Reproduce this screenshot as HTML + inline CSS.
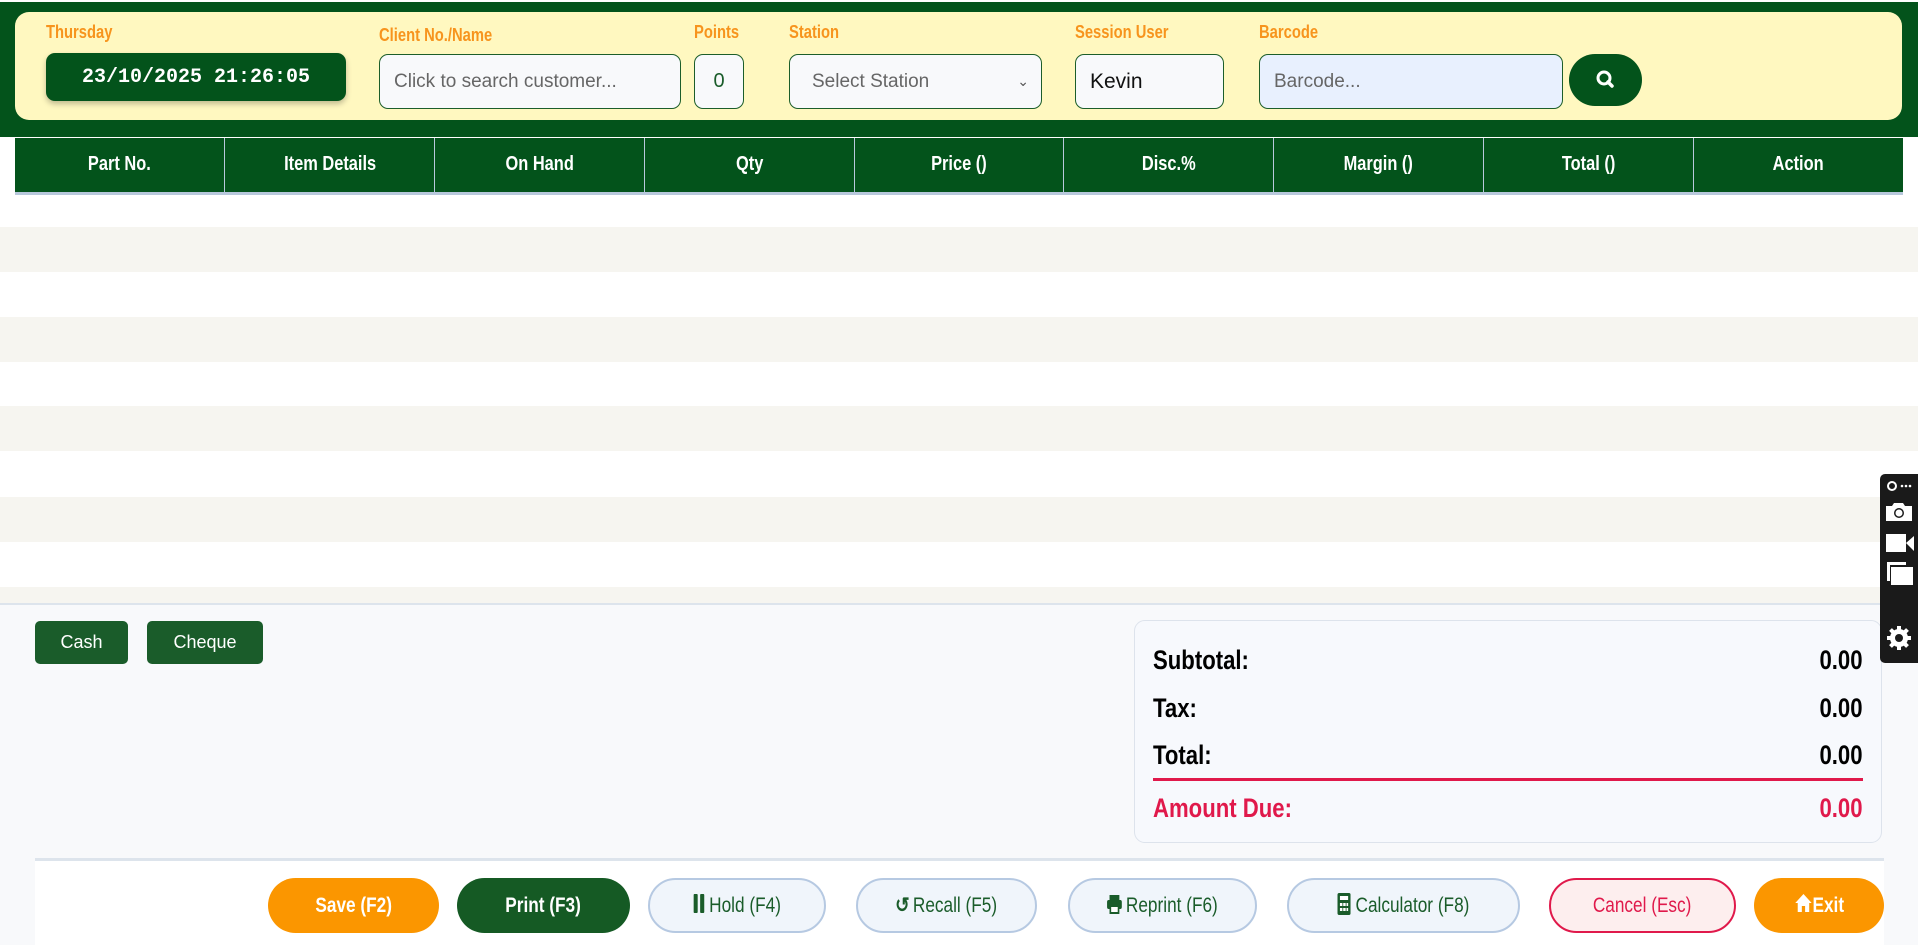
<!DOCTYPE html>
<html><head><meta charset="utf-8"><style>
*{box-sizing:border-box;margin:0;padding:0}
body{width:1918px;height:945px;overflow:hidden;background:#f8f9fb;font-family:"Liberation Sans",sans-serif;position:relative}
.abs{position:absolute}
.nar{display:inline-block;transform:scaleX(.82);transform-origin:left center}
.narc{display:inline-block;transform:scaleX(.82);transform-origin:center}
.narr{display:inline-block;transform:scaleX(.82);transform-origin:right center}
.hdr{left:0;top:2px;width:1918px;height:135px;background:#03531b}
.panel{left:15px;top:12px;width:1887px;height:108px;background:#fff8c0;border-radius:14px}
.lbl{color:#f7941d;font-weight:bold;font-size:18px;top:22px}
.inp{top:54px;height:55px;border:1px solid #1c5e2a;border-radius:9px;background:#f8f9fb;font-size:19px;color:#666;display:flex;align-items:center;padding-left:14px}
table{position:absolute;left:15px;top:138px;width:1888px;border-collapse:collapse;table-layout:fixed}
th{background:#03531b;color:#fff;height:55px;font-size:20px;border-left:1px solid #b8c8dc;border-bottom:3px solid #b8c8dc}
th:first-child{border-left:none}
.row{left:0;width:1918px;height:45px;background:#f6f5f0}
.btn{top:878px;height:55px;border-radius:28px;display:flex;align-items:center;justify-content:center;font-size:21px}
.lt{background:#f0f5fb;border:2px solid #b6c9e2;color:#1a5c2a}
.tl{font-weight:bold;font-size:27px;position:absolute;left:18px}
.tv{font-weight:bold;font-size:27px;position:absolute;right:18px}
</style></head><body>
<div class="abs" style="left:0;top:0;width:1918px;height:603px;background:#fff"></div>
<div class="abs hdr"></div>
<div class="abs panel"></div>
<div class="abs lbl" style="left:46px"><span class="nar">Thursday</span></div>
<div class="abs lbl" style="left:379px;top:25px"><span class="nar">Client No./Name</span></div>
<div class="abs lbl" style="left:694px"><span class="nar">Points</span></div>
<div class="abs lbl" style="left:789px"><span class="nar">Station</span></div>
<div class="abs lbl" style="left:1075px"><span class="nar">Session User</span></div>
<div class="abs lbl" style="left:1259px"><span class="nar">Barcode</span></div>
<div class="abs" style="left:46px;top:53px;width:300px;height:48px;background:#03531b;border-radius:9px;color:#fff;font-family:'Liberation Mono',monospace;font-size:20px;font-weight:bold;display:flex;align-items:center;justify-content:center;box-shadow:0 3px 6px rgba(0,0,0,.25)">23/10/2025 21:26:05</div>
<div class="abs inp" style="left:379px;width:302px">Click to search customer...</div>
<div class="abs inp" style="left:694px;width:50px;padding:0;justify-content:center;color:#1a5c2a;font-size:20px;border-radius:9px">0</div>
<div class="abs inp" style="left:789px;width:253px;padding-left:22px">Select Station<span style="position:absolute;right:12px;font-size:14px;color:#555">&#8964;</span></div>
<div class="abs inp" style="left:1075px;width:149px;color:#111;font-size:21px">Kevin</div>
<div class="abs inp" style="left:1259px;width:304px;background:#e8f0fe">Barcode...</div>
<div class="abs" style="left:1569px;top:54px;width:73px;height:52px;border-radius:26px;background:#03531b"><svg width="73" height="52"><circle cx="35" cy="24" r="6" fill="none" stroke="#fff" stroke-width="3"/><line x1="39" y1="28" x2="43" y2="32" stroke="#fff" stroke-width="3.5" stroke-linecap="round"/></svg></div>
<div class="abs row" style="top:227px"></div>
<div class="abs row" style="top:317px"></div>
<div class="abs row" style="top:406px"></div>
<div class="abs row" style="top:497px"></div>
<div class="abs row" style="top:587px;height:16px"></div>
<table><tr><th><span class="narc">Part No.</span></th><th><span class="narc">Item Details</span></th><th><span class="narc">On Hand</span></th><th><span class="narc">Qty</span></th><th><span class="narc">Price ()</span></th><th><span class="narc">Disc.%</span></th><th><span class="narc">Margin ()</span></th><th><span class="narc">Total ()</span></th><th><span class="narc">Action</span></th></tr></table>
<div class="abs" style="left:0;top:603px;width:1918px;height:2px;background:#dde4ec"></div>
<div class="abs" style="left:35px;top:621px;width:93px;height:43px;background:#1a5c2a;color:#fff;border-radius:5px;display:flex;align-items:center;justify-content:center;font-size:18px">Cash</div>
<div class="abs" style="left:147px;top:621px;width:116px;height:43px;background:#1a5c2a;color:#fff;border-radius:5px;display:flex;align-items:center;justify-content:center;font-size:18px">Cheque</div>
<div class="abs" style="left:1134px;top:620px;width:748px;height:223px;background:#f7f9fd;border:1px solid #dde3ec;border-radius:11px">
<span class="tl" style="top:24px"><span class="nar">Subtotal:</span></span><span class="tv" style="top:24px"><span class="narr">0.00</span></span>
<span class="tl" style="top:72px"><span class="nar">Tax:</span></span><span class="tv" style="top:72px"><span class="narr">0.00</span></span>
<span class="tl" style="top:119px"><span class="nar">Total:</span></span><span class="tv" style="top:119px"><span class="narr">0.00</span></span>
<div style="position:absolute;left:18px;right:18px;top:157px;height:3px;background:#e0194b"></div>
<span class="tl" style="top:172px;color:#e0194b"><span class="nar">Amount Due:</span></span><span class="tv" style="top:172px;color:#e0194b"><span class="narr">0.00</span></span>
</div>
<div class="abs" style="left:35px;top:858px;width:1849px;height:87px;background:#fff;border-top:3px solid #dde4ec"></div>
<div class="abs btn" style="left:268px;width:171px;background:#fb9600;color:#fff;font-weight:bold"><span class="narc">Save (F2)</span></div>
<div class="abs btn" style="left:457px;width:173px;background:#155a24;color:#fff;font-weight:bold"><span class="narc">Print (F3)</span></div>
<div class="abs btn lt" style="left:648px;width:178px"><span class="narc"><svg width="14" height="20" style="margin-right:5px;vertical-align:-2px"><rect x="0" y="0" width="5" height="19" rx="1" fill="#1a5c2a"/><rect x="8" y="0" width="5" height="19" rx="1" fill="#1a5c2a"/></svg>Hold (F4)</span></div>
<div class="abs btn lt" style="left:856px;width:181px"><span class="narc"><b style="margin-right:4px">&#8634;</b>Recall (F5)</span></div>
<div class="abs btn lt" style="left:1068px;width:189px"><span class="narc"><svg width="20" height="20" style="margin-right:4px;vertical-align:-2px"><rect x="4" y="1" width="12" height="5" fill="#1a5c2a"/><rect x="1" y="6" width="18" height="9" rx="2" fill="#1a5c2a"/><rect x="5" y="12" width="10" height="7" fill="#fff" stroke="#1a5c2a" stroke-width="2"/></svg>Reprint (F6)</span></div>
<div class="abs btn lt" style="left:1287px;width:233px"><span class="narc"><svg width="16" height="22" style="margin-right:6px;vertical-align:-3px"><rect x="0" y="0" width="16" height="22" rx="2" fill="#1a5c2a"/><rect x="3" y="3" width="10" height="4" fill="#fff"/><g fill="#fff"><rect x="3" y="10" width="3" height="3"/><rect x="7" y="10" width="3" height="3"/><rect x="11" y="10" width="2" height="3"/><rect x="3" y="15" width="3" height="3"/><rect x="7" y="15" width="3" height="3"/><rect x="11" y="15" width="2" height="3"/></g></svg>Calculator (F8)</span></div>
<div class="abs btn" style="left:1549px;width:187px;background:#fdeeee;border:2px solid #e0194b;color:#e0194b"><span class="narc">Cancel (Esc)</span></div>
<div class="abs btn" style="left:1754px;width:130px;background:#fb9600;color:#fff;font-weight:bold"><span class="narc"><svg width="22" height="20" style="vertical-align:-1px"><path d="M11 1L1 10h3v9h5v-6h4v6h5v-9h3z" fill="#fff"/></svg>Exit</span></div>
<div class="abs" style="left:1880px;top:474px;width:38px;height:189px;background:#1a1a1a;border-radius:5px 0 0 5px">
<svg width="38" height="189"><g fill="#fff">
<circle cx="12" cy="12" r="4" fill="none" stroke="#fff" stroke-width="2"/><circle cx="22" cy="12" r="1.3"/><circle cx="26" cy="12" r="1.3"/><circle cx="30" cy="12" r="1.3"/>
<path d="M6 32h6l2-3h9l2 3h7v15H6z"/><circle cx="19" cy="39" r="5" fill="#1a1a1a"/><circle cx="19" cy="39" r="3.5" fill="#fff"/>
<path d="M6 60h20v18H6zM26 69l8-7v15z"/>
<path d="M7 88h19v3H10v16H7z"/><rect x="11" y="93" width="22" height="18"/>
<circle cx="19" cy="164" r="9"/><g stroke="#fff" stroke-width="4"><line x1="19" y1="152" x2="19" y2="176"/><line x1="7" y1="164" x2="31" y2="164"/><line x1="10.5" y1="155.5" x2="27.5" y2="172.5"/><line x1="27.5" y1="155.5" x2="10.5" y2="172.5"/></g><circle cx="19" cy="164" r="4" fill="#1a1a1a"/>
</g></svg></div>
</body></html>
